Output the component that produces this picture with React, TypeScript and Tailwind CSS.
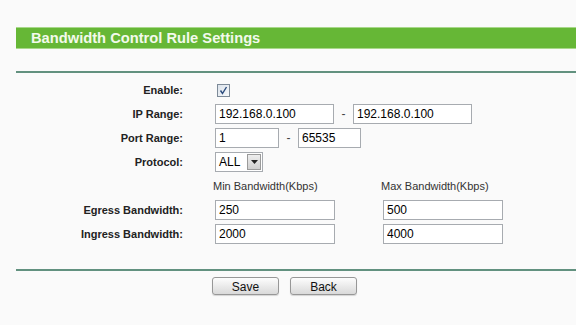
import React from 'react';

const Field: React.FC<{ value: string; width: string }> = ({ value, width }) => (
  <input
    readOnly
    value={value}
    className={`${width} h-[20px] border border-[#a7abb0] bg-white px-[3px] text-[12px] text-black outline-none`}
  />
);

const Label: React.FC<{ children: React.ReactNode }> = ({ children }) => (
  <div className="flex h-6 items-center justify-end text-[11px] font-bold text-[#222]">{children}</div>
);

const Dash = () => <span className="w-[19px] text-center text-[12px] text-[#444]">-</span>;

export default function App() {
  return (
    <div className="min-h-[325px] w-[576px] bg-[#fafafa] pl-4 pt-[27px] font-['Liberation_Sans',Arial,sans-serif] text-[#222]">
      <div className="flex h-[22px] items-center border-y border-[#a8d88a] bg-[#66b736] pl-[15px] text-[14.7px] font-bold text-[#f3faec]">
        Bandwidth Control Rule Settings
      </div>
      <div className="mt-[22px] h-[2px] bg-[#62917f]" />

      <div className="grid grid-cols-[167px_auto] gap-x-8 pt-[5px]">
        <Label>Enable:</Label>
        <div className="flex h-6 items-center">
          <span className="ml-[2px] flex h-[13px] w-[13px] items-center justify-center border border-[#7d8a98] bg-gradient-to-br from-[#dce3eb] to-[#f6f8fa]">
            <svg width="9" height="9" viewBox="0 0 9 9">
              <path d="M1.5 4.5 L3.5 7.5 L7.5 1" fill="none" stroke="#2a4a7c" strokeWidth="1.4" />
            </svg>
          </span>
        </div>

        <Label>IP Range:</Label>
        <div className="flex h-6 items-center">
          <Field value="192.168.0.100" width="w-[119px]" />
          <Dash />
          <Field value="192.168.0.100" width="w-[119px]" />
        </div>

        <Label>Port Range:</Label>
        <div className="flex h-6 items-center">
          <Field value="1" width="w-[64px]" />
          <Dash />
          <Field value="65535" width="w-[63px]" />
        </div>

        <Label>Protocol:</Label>
        <div className="flex h-6 items-center">
          <div className="flex h-[20px] w-[48px] items-center border border-[#a7abb0] bg-white">
            <span className="flex-1 pl-[3px] text-[12px] text-black">ALL</span>
            <span className="mr-px flex h-[16px] w-[14px] items-center justify-center border border-[#9a9a9a] bg-gradient-to-b from-[#eeeeee] to-[#cfcfcf]">
              <svg width="7" height="4" viewBox="0 0 7 4">
                <path d="M0 0 L7 0 L3.5 4 Z" fill="#222" />
              </svg>
            </span>
          </div>
        </div>

        <div className="h-6" />
        <div className="-ml-[2px] flex h-6 items-center gap-12 text-[11px] text-[#333]">
          <span className="w-[120px]">Min Bandwidth(Kbps)</span>
          <span>Max Bandwidth(Kbps)</span>
        </div>

        <Label>Egress Bandwidth:</Label>
        <div className="flex h-6 items-center gap-12">
          <Field value="250" width="w-[120px]" />
          <Field value="500" width="w-[120px]" />
        </div>

        <Label>Ingress Bandwidth:</Label>
        <div className="flex h-6 items-center gap-12">
          <Field value="2000" width="w-[120px]" />
          <Field value="4000" width="w-[120px]" />
        </div>
      </div>

      <div className="mt-[23px] h-[2px] bg-[#62917f]" />

      <div className="mt-[6px] flex gap-[11px] pl-[196px]">
        <button className="h-[18px] w-[67px] rounded-[3px] border border-[#979797] bg-gradient-to-b from-[#fdfdfd] to-[#d9d9d9] text-[12px] text-[#111] shadow-[0_1px_1px_rgba(0,0,0,0.15)]">
          Save
        </button>
        <button className="h-[18px] w-[67px] rounded-[3px] border border-[#979797] bg-gradient-to-b from-[#fdfdfd] to-[#d9d9d9] text-[12px] text-[#111] shadow-[0_1px_1px_rgba(0,0,0,0.15)]">
          Back
        </button>
      </div>
    </div>
  );
}
